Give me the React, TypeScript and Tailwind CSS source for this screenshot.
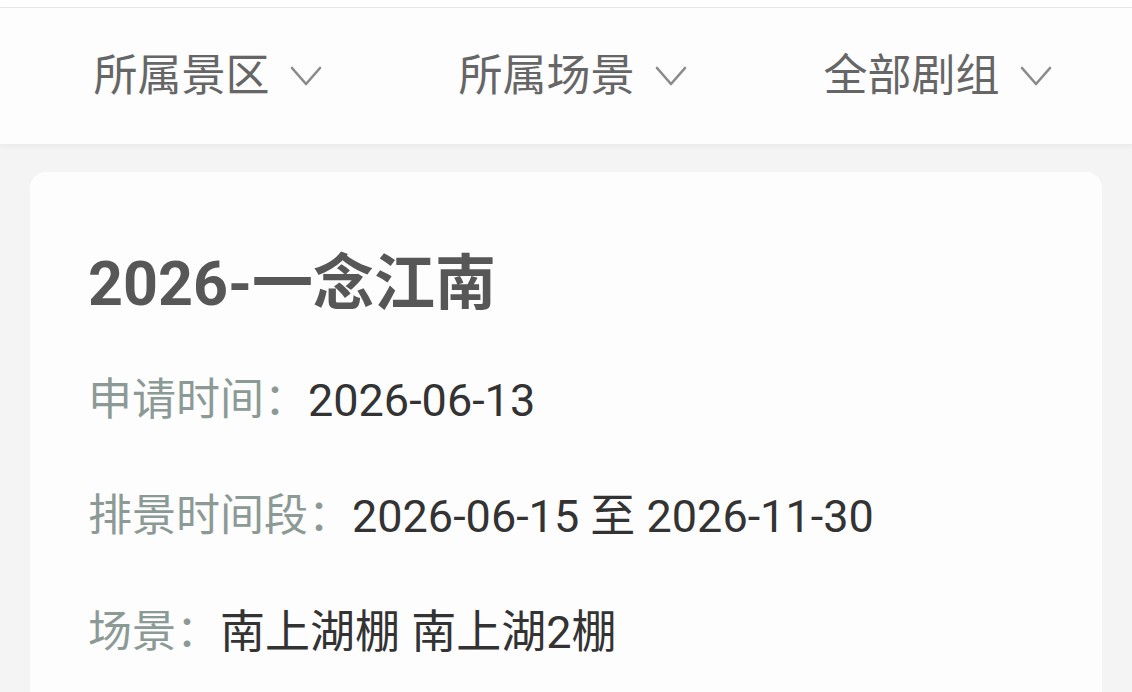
import React from 'react';

const Chevron: React.FC = () => (
  <svg viewBox="0 0 32 28" className="w-[32px] h-[28px] ml-[20px]" fill="none">
    <path d="M2 6 L16 22 L30 6" stroke="#8a8a8a" strokeWidth="2.6" strokeLinecap="round" strokeLinejoin="round" />
  </svg>
);

const filters = ['所属景区', '所属场景', '全部剧组'];

const rows = [
  { label: '申请时间：', value: '2026-06-13' },
  { label: '排景时间段：', value: '2026-06-15 至 2026-11-30' },
  { label: '场景：', value: '南上湖棚 南上湖2棚' },
];

const App: React.FC = () => {
  return (
    <div
      className="w-[1132px] h-[692px] overflow-hidden bg-[#f4f4f4]"
      style={{ fontFamily: "Roboto, 'Noto Sans CJK SC', sans-serif" }}
    >
      <div className="h-[8px] bg-white border-b border-[#e6e6e6]" />
      <div className="h-[137px] bg-[#fdfdfd] border-b border-[#ececec] shadow-[0_2px_4px_rgba(0,0,0,0.04)] grid grid-cols-3 pl-[25px] pr-[12px]">
        {filters.map((f) => (
          <div key={f} className="flex items-center justify-center">
            <span className="text-[44px] leading-none text-[#666666]">{f}</span>
            <Chevron />
          </div>
        ))}
      </div>

      <div className="pl-[30px] pr-[30px] pt-[27px]">
        <div className="bg-[#fdfdfd] rounded-[16px] h-[600px] pl-[58px] pt-[77px]">
          <div className="text-[61px] leading-[70px] font-bold text-[#575757]">2026-一念江南</div>
          <div className="mt-[23px]">
            {rows.map((r) => (
              <div key={r.label} className="flex items-center h-[116px] leading-none">
                <span className="text-[44px] text-[#8c9a96]">{r.label}</span>
                <span className="text-[45px] text-[#333333]">{r.value}</span>
              </div>
            ))}
          </div>
        </div>
      </div>
    </div>
  );
};

export default App;
